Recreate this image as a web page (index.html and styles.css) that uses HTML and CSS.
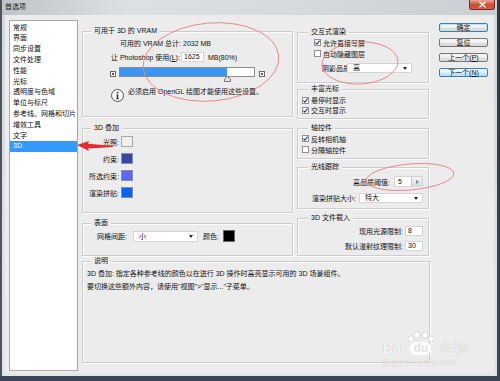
FILE: index.html
```html
<!DOCTYPE html>
<html lang="zh-CN">
<head>
    <meta charset="UTF-8">
    <title>首选项</title>
    <link rel="stylesheet" href="styles.css">
</head>
<body>
    <div class="window">
        <div class="titlebar">
            <span class="title">首选项</span>
            <span class="close">
                <svg width="9" height="7" viewBox="0 0 9 7"><path d="M1.5 0.8 L7.5 6.2 M7.5 0.8 L1.5 6.2" stroke="#fff" stroke-width="1.4"/></svg>
            </span>
        </div>
        <div class="client">
            <ul class="nav">
                <li>常规</li>
                <li>界面</li>
                <li>同步设置</li>
                <li>文件处理</li>
                <li>性能</li>
                <li>光标</li>
                <li>透明度与色域</li>
                <li>单位与标尺</li>
                <li>参考线、网格和切片</li>
                <li>增效工具</li>
                <li>文字</li>
                <li class="active">3D</li>
            </ul>

            <div class="content">
                <div class="cols">
                    <div class="col col-left">
                        <div class="group vram">
                            <span class="legend">可用于 3D 的 VRAM</span>
                            <div class="row vram-total">可用的 VRAM 总计: 2032 MB</div>
                            <div class="row vram-use">
                                <span class="label">让 Photoshop 使用(<u>L</u>):</span>
                                <span class="field">1625</span>
                                <span class="unit">MB(80%)</span>
                            </div>
                            <div class="row slider-row">
                                <span class="end-icon"></span>
                                <div class="bar">
                                    <div class="bar-fill"></div>
                                    <svg class="thumb" width="7" height="6" viewBox="0 0 7 6"><path d="M3.5 0.5 L6.5 3 L6.5 5.5 L0.5 5.5 L0.5 3 Z" fill="#e4e4e4" stroke="#777" stroke-width="1"/></svg>
                                </div>
                                <span class="end-icon"></span>
                            </div>
                            <div class="info">
                                <svg width="13" height="13" viewBox="0 0 13 13">
                                    <circle cx="6.5" cy="6.5" r="6" fill="#f8f8f8" stroke="#555" stroke-width="1"/>
                                    <circle cx="6.6" cy="3.6" r="0.9" fill="#333"/>
                                    <path d="M5.3 5.4 H7.3 V9.4 H8 V10.2 H5.1 V9.4 H5.8 V6.2 H5.3 Z" fill="#333"/>
                                </svg>
                                <span class="info-text">必须启用 OpenGL 绘图才能使用这些设置。</span>
                            </div>
                        </div>

                        <div class="group overlay">
                            <span class="legend">3D 叠加</span>
                            <div class="swatches">
                                <span class="sw-label">光照:</span><span class="swatch sw-light"></span>
                                <span class="sw-label">约束:</span><span class="swatch sw-constraint"></span>
                                <span class="sw-label">所选约束:</span><span class="swatch sw-selected"></span>
                                <span class="sw-label">渲染拼贴:</span><span class="swatch sw-tiles"></span>
                            </div>
                        </div>

                        <div class="group surface">
                            <span class="legend">表面</span>
                            <div class="row">
                                <span class="label">网格间距:</span>
                                <span class="select">小</span>
                                <span class="color-label">颜色:</span>
                                <span class="swatch-lg"></span>
                            </div>
                        </div>
                    </div>

                    <div class="col col-right">
                        <div class="group render">
                            <span class="legend">交互式渲染</span>
                            <div class="row cb-row"><span class="cb checked"><svg width="5" height="5" viewBox="0 0 5 5"><path d="M0.4 2.6 L1.9 4.1 L4.6 0.6" fill="none" stroke="#243f7a" stroke-width="1.1"/></svg></span>允许直接写屏</div>
                            <div class="row cb-row"><span class="cb"></span>自动隐藏图层</div>
                            <div class="row shadow-row">
                                <span class="label">阴影品质:</span>
                                <span class="select">高</span>
                            </div>
                        </div>

                        <div class="group cursor">
                            <span class="legend">丰富光标</span>
                            <div class="row cb-row"><span class="cb checked"><svg width="5" height="5" viewBox="0 0 5 5"><path d="M0.4 2.6 L1.9 4.1 L4.6 0.6" fill="none" stroke="#243f7a" stroke-width="1.1"/></svg></span>悬停时显示</div>
                            <div class="row cb-row"><span class="cb checked"><svg width="5" height="5" viewBox="0 0 5 5"><path d="M0.4 2.6 L1.9 4.1 L4.6 0.6" fill="none" stroke="#243f7a" stroke-width="1.1"/></svg></span>交互时显示</div>
                        </div>

                        <div class="group axis">
                            <span class="legend">轴控件</span>
                            <div class="row cb-row"><span class="cb checked"><svg width="5" height="5" viewBox="0 0 5 5"><path d="M0.4 2.6 L1.9 4.1 L4.6 0.6" fill="none" stroke="#243f7a" stroke-width="1.1"/></svg></span>反转相机轴</div>
                            <div class="row cb-row"><span class="cb"></span>分隔轴控件</div>
                        </div>

                        <div class="group ray">
                            <span class="legend">光线跟踪</span>
                            <div class="row threshold-row">
                                <span class="label">高品质阈值:</span>
                                <span class="spin"><span class="val">5</span><span class="spin-btn"></span></span>
                            </div>
                            <div class="row tile-row">
                                <span class="label">渲染拼贴大小:</span>
                                <span class="select">特大</span>
                            </div>
                        </div>

                        <div class="group fileload">
                            <span class="legend">3D 文件载入</span>
                            <div class="row limit-row">
                                <span class="label">现用光源限制:</span>
                                <span class="field">8</span>
                            </div>
                            <div class="row limit-row">
                                <span class="label">默认漫射纹理限制:</span>
                                <span class="field">30</span>
                            </div>
                        </div>
                    </div>
                </div>

                <div class="group desc">
                    <span class="legend">说明</span>
                    <p>3D 叠加: 指定各种参考线的颜色以在进行 3D 操作时高亮显示可用的 3D 场景组件。</p>
                    <p>要切换这些额外内容，请使用"视图"&gt;"显示..."子菜单。</p>
                </div>
            </div>

            <div class="buttons">
                <button class="btn btn-default">确定</button>
                <button class="btn">复位</button>
                <button class="btn">上一个(<u>P</u>)</button>
                <button class="btn btn-focus">下一个(<u>N</u>)</button>
            </div>
        </div>
    </div>

    <!-- red marks drawn over the screenshot -->
    <svg class="marks" width="500" height="381" viewBox="0 0 500 381">
        <g fill="none" stroke="#ea7f7f" stroke-width="0.9">
            <ellipse cx="211" cy="62" rx="68" ry="39" transform="rotate(-5 211 62)"/>
            <ellipse cx="360" cy="63" rx="38" ry="21" transform="rotate(-3 360 63)"/>
            <ellipse cx="410" cy="177" rx="44" ry="13" transform="rotate(-5 410 177)"/>
        </g>
        <path d="M77 145 L89 141 L88 143.8 L113 146 L113 147 L88 148.4 L89 151 Z" fill="#e42a2a"/>
    </svg>

    <div class="watermark">
        <div class="wm-logo">
            <span class="wm-bai">Bai</span>
            <span class="wm-paw">
                <svg width="30" height="11" viewBox="0 0 30 11">
                    <ellipse cx="5" cy="8" rx="3" ry="3"/>
                    <ellipse cx="11" cy="4" rx="3" ry="3.5"/>
                    <ellipse cx="19" cy="4" rx="3" ry="3.5"/>
                    <ellipse cx="25" cy="8" rx="3" ry="3"/>
                </svg>
                <span class="wm-du">du</span>
            </span>
            <span class="wm-jy">经验</span>
        </div>
        <div class="wm-url">jingyan.baidu.com</div>
    </div>
</body>
</html>
```

FILE: styles.css
```css
* {
    box-sizing: border-box;
}

body {
    margin: 0;
    width: 500px;
    height: 381px;
    overflow: hidden;
    position: relative;
    background: linear-gradient(#2d3641, #3b4756);
    font-family: "Liberation Sans", "Noto Sans CJK SC", sans-serif;
    font-size: 7px;
    color: #111;
}

.window {
    width: 497px;
    height: 376px;
    border-left: 2px solid #4d545b;
    background: linear-gradient(#d3d8dc, #e3e6e9);
    display: flex;
    flex-direction: column;
}

.titlebar {
    height: 15px;
    flex: none;
    display: flex;
    align-items: flex-start;
    padding-left: 3px;
    background: linear-gradient(to right, #bfc4c9, #dde0e3 25%, #d6dadd 60%, #c9ced3);
}

.title {
    margin-top: 3px;
    line-height: 8px;
    color: #222;
}

.close {
    margin-left: auto;
    margin-right: 2px;
    width: 26px;
    height: 10px;
    display: flex;
    align-items: center;
    justify-content: center;
    background: linear-gradient(#e9a593, #cf4a31 55%, #d65d41);
    border: 1px solid #7b2b22;
    border-top: none;
    border-radius: 0 0 3px 3px;
}

.client {
    flex: 1;
    margin: 0 3px 3px 3px;
    background: #ececec;
    display: flex;
    padding: 5px 0 0 4px;
}

/* category list */
.nav {
    list-style: none;
    margin: 0;
    width: 69px;
    height: 351px;
    padding: 1.6px 0 0;
    background: #fff;
    border: 1px solid #a8a8a8;
}

.nav li {
    height: 10.8px;
    line-height: 10.8px;
    padding-left: 3px;
    white-space: nowrap;
}

.nav li.active {
    background: #3399ff;
    color: #fff;
}

.content {
    margin-left: 4px;
    padding-top: 11px;
    width: 348px;
}

.cols {
    display: flex;
    gap: 4px;
}

.col {
    display: flex;
    flex-direction: column;
}

.col-left {
    width: 211px;
}

.col-right {
    width: 132px;
}

/* group boxes */
.group {
    border: 1px solid #cdcdcd;
    box-shadow: inset 1px 1px 0 #fbfbfb, 1px 1px 0 #fbfbfb;
}

.legend {
    display: block;
    width: max-content;
    height: 8px;
    line-height: 8px;
    margin: -5px 0 0 8px;
    padding: 0 3px;
    background: #ececec;
}

.col-right .legend {
    margin-left: 10px;
}

.row {
    display: flex;
    align-items: center;
    white-space: nowrap;
}

.field {
    display: block;
    height: 10px;
    line-height: 8px;
    padding: 0 2px;
    background: #fff;
    border: 1px solid #d3d5d9;
}

.select {
    position: relative;
    display: block;
    height: 10px;
    line-height: 8px;
    padding-left: 5px;
    background: #fff;
    border: 1px solid #d3d5d9;
}

.select::after {
    content: "";
    position: absolute;
    right: 4px;
    top: 3px;
    border-left: 2px solid transparent;
    border-right: 2px solid transparent;
    border-top: 3px solid #222;
}

/* VRAM */
.vram {
    height: 86px;
}

.vram-total {
    margin-top: 3px;
    height: 10px;
    padding-left: 37px;
}

.vram-use {
    margin-top: 4px;
    height: 10px;
    padding-left: 28px;
}

.vram-use .label {
    width: 70px;
}

.vram-use .field {
    width: 23px;
}

.vram-use .unit {
    margin-left: 4px;
}

.slider-row {
    margin-top: 5px;
    height: 10px;
    padding-left: 27px;
    align-items: flex-start;
}

.end-icon {
    width: 6px;
    height: 6px;
    margin-top: 4px;
    border: 1px solid #6a6a6a;
    background: #fafafa;
    display: flex;
    align-items: center;
    justify-content: center;
}

.end-icon::after {
    content: "";
    width: 2px;
    height: 2px;
    background: #555;
}

.bar {
    position: relative;
    width: 136px;
    height: 10px;
    margin: 0 4px 0 3px;
    border: 1px solid #8c8c8c;
    background: #fff;
}

.bar-fill {
    width: 80%;
    height: 100%;
    background: #3a97f3;
}

.thumb {
    position: absolute;
    left: 104px;
    top: 8px;
}

.info {
    display: flex;
    align-items: flex-start;
    margin-top: 12px;
    padding-left: 28px;
}

.info-text {
    margin: -1px 0 0 4px;
    line-height: 8px;
}

/* 3D overlay colours */
.overlay {
    height: 85px;
    margin-top: 11px;
}

.swatches {
    display: grid;
    grid-template-columns: 32px 12px;
    grid-auto-rows: 11px;
    column-gap: 2px;
    row-gap: 6px;
    align-items: center;
    margin-top: 4px;
    padding-left: 4px;
}

.sw-label {
    text-align: right;
    white-space: nowrap;
}

.swatch {
    width: 12px;
    height: 11px;
    border: 1px solid #8e8e8e;
}

.sw-light { background: #efefef; border-color: #a9a9a9; }
.sw-constraint { background: #3547ad; }
.sw-selected { background: #5a68ff; }
.sw-tiles { background: #0064ff; }

/* surface */
.surface {
    height: 33px;
    margin-top: 10px;
}

.surface .row {
    margin-top: 3px;
    height: 12px;
    padding-left: 14px;
}

.surface .label {
    width: 36px;
}

.surface .select {
    width: 65px;
    height: 11px;
    line-height: 9px;
}

.color-label {
    width: 20px;
    margin-left: 5px;
}

.swatch-lg {
    width: 12px;
    height: 12px;
    background: #000;
    border: 1px solid #666;
}

/* description */
.desc {
    height: 102px;
    margin-top: 5px;
}

.desc p {
    margin: 0;
    padding-left: 4px;
    line-height: 13px;
    white-space: nowrap;
}

.desc p:first-of-type {
    margin-top: 2px;
}

/* right column */
.cb {
    flex: none;
    width: 7px;
    height: 7px;
    margin-right: 2px;
    border: 1px solid #8f8f8f;
    background: #fff;
    display: flex;
    align-items: center;
    justify-content: center;
}

.render {
    height: 51px;
    margin-top: 1px;
}

.render .cb-row {
    height: 11px;
    padding-left: 16px;
}

.render .cb-row:first-of-type {
    margin-top: 1px;
}

.shadow-row {
    margin-top: 4px;
    height: 10px;
    padding-left: 24px;
}

.shadow-row .label {
    width: 25px;
}

.shadow-row .select {
    width: 65px;
}

.cursor {
    height: 30px;
    margin-top: 6px;
}

.cursor .cb-row {
    height: 10px;
    padding-left: 4px;
}

.cursor .cb-row:first-of-type {
    margin-top: 2px;
}

.axis {
    height: 31px;
    margin-top: 9px;
}

.axis .cb-row {
    height: 11px;
    padding-left: 4px;
}

.axis .cb-row:first-of-type {
    margin-top: 1px;
}

.ray {
    height: 42px;
    margin-top: 8px;
}

.threshold-row {
    margin-top: 5px;
    height: 11px;
}

.threshold-row .label {
    width: 92px;
    text-align: right;
}

.spin {
    display: flex;
    width: 29px;
    height: 11px;
    margin-left: 4px;
    background: #fff;
    border: 1px solid #d3d5d9;
}

.spin .val {
    flex: 1;
    padding-left: 3px;
    line-height: 9px;
}

.spin-btn {
    width: 11px;
    display: flex;
    align-items: center;
    justify-content: center;
    background: linear-gradient(#f3f3f3, #d9dce0);
    border-left: 1px solid #c6c8cc;
}

.spin-btn::after {
    content: "";
    border-top: 2px solid transparent;
    border-bottom: 2px solid transparent;
    border-left: 3px solid #7c8aa0;
}

.tile-row {
    margin-top: 6px;
    height: 10px;
    padding-left: 14px;
}

.tile-row .label {
    width: 47px;
}

.tile-row .select {
    width: 64px;
}

.fileload {
    height: 38px;
    margin-top: 9px;
}

.limit-row {
    margin-top: 4px;
    height: 10px;
}

.limit-row + .limit-row {
    margin-top: 5px;
}

.limit-row .label {
    width: 105px;
    text-align: right;
}

.limit-row .field {
    width: 18px;
    margin-left: 2px;
}

/* dialog buttons */
.buttons {
    margin: 3px 0 0 9px;
    display: flex;
    flex-direction: column;
    gap: 6px;
}

.btn {
    width: 49px;
    height: 9px;
    padding: 0;
    font: inherit;
    line-height: 7px;
    color: #111;
    text-align: center;
    border: 1px solid #767676;
    border-radius: 2px;
    background: linear-gradient(#f4f4f4 45%, #e1e1e1 55%, #d6d6d6);
}

.btn-default {
    border-color: #3c7fb1;
    box-shadow: inset 0 0 0 1px #bde3f7;
}

.btn-focus {
    border-color: #3c7fb1;
    background: linear-gradient(#e8f5fc 45%, #c9e8f8 55%, #b6dff5);
}

/* overlays */
.marks {
    position: absolute;
    left: 0;
    top: 0;
    pointer-events: none;
}

.watermark {
    position: absolute;
    left: 383px;
    top: 329px;
    color: rgba(255, 255, 255, 0.9);
    text-shadow: 0 0 1px rgba(120, 120, 120, 0.55);
    pointer-events: none;
}

.wm-logo {
    display: flex;
    align-items: flex-end;
    height: 26px;
}

.wm-bai {
    font-size: 14px;
    font-weight: bold;
    line-height: 14px;
}

.wm-paw {
    display: flex;
    flex-direction: column;
    align-items: center;
    width: 32px;
}

.wm-paw svg {
    fill: rgba(255, 255, 255, 0.9);
    stroke: rgba(140, 140, 140, 0.45);
    stroke-width: 0.6;
}

.wm-du {
    font-size: 12px;
    font-weight: bold;
    line-height: 13px;
    padding: 0 3px;
    border-radius: 6px;
    background: rgba(255, 255, 255, 0.9);
    color: #e4e4e4;
    text-shadow: none;
}

.wm-jy {
    margin-left: 4px;
    font-size: 14px;
    line-height: 14px;
}

.wm-url {
    margin-top: 3px;
    font-size: 9px;
    line-height: 9px;
    letter-spacing: 0.1px;
}
```
